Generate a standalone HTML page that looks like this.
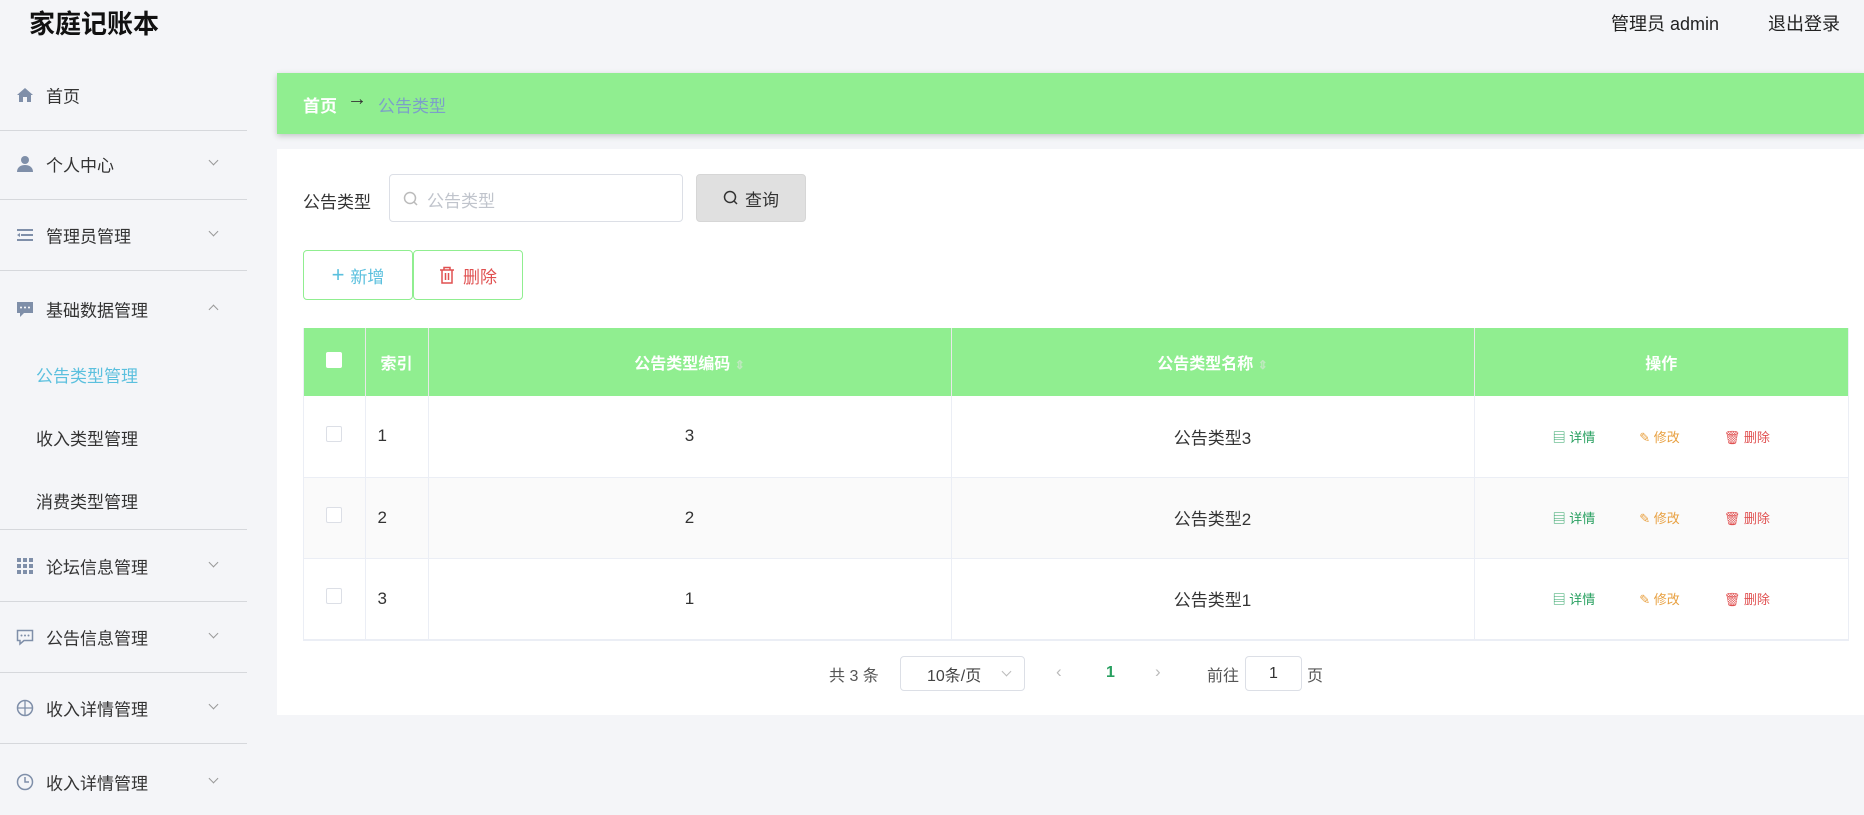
<!DOCTYPE html>
<html><head><meta charset="utf-8"><style>
*{box-sizing:border-box;margin:0;padding:0}
body{width:1864px;height:796px;overflow:hidden;background:#f4f5f8;font-family:"Liberation Sans","Noto Sans CJK SC",sans-serif;color:#333;position:relative}
.abs{position:absolute}
.title{left:29px;top:4px;font-size:26px;font-weight:bold;color:#111}
.hr{top:10px;font-size:18px;color:#222}
.side .it{position:absolute;left:0;width:247px;height:71px;border-bottom:1px solid #d6d8dc;font-size:17px;color:#333}
.side .it span{position:absolute;left:46px;top:50%;transform:translateY(-50%)}
.side .it i{position:absolute;left:16px;top:50%;transform:translateY(-50%);width:18px;height:18px}
.side .it b{position:absolute;left:210px;top:50%;margin-top:-7px;width:7px;height:7px;border-right:1px solid #999;border-bottom:1px solid #999;transform:rotate(45deg)}
.side .it b.up{transform:rotate(-135deg);margin-top:-3px}
.sub{position:absolute;left:36px;font-size:17px;color:#333}
.bc{left:277px;top:73px;width:1587px;height:61px;background:#90ee90;box-shadow:0 2px 6px rgba(0,0,0,.2);font-size:17px}
.card{left:277px;top:149px;width:1587px;height:566px;background:#fff}
.btn{position:absolute;border:1px solid #90ee90;border-radius:4px;background:#fff;font-size:17px;display:flex;align-items:center;justify-content:center}
table{position:absolute;left:303px;top:328px;width:1546px;border-collapse:collapse;font-size:17px}
th{background:#90ee90;color:#fff;height:68px;border-right:1px solid #e8e8e8;font-size:16px}
td{height:81px;border-right:1px solid #ebeef5;border-bottom:1px solid #ebeef5;text-align:center}
tr.alt td{background:#fafafa}
.cb{display:inline-block;width:16px;height:16px;border:1px solid #dcdfe6;border-radius:2px;background:#fff}
.ops{font-size:13px}
.ops span{display:inline-block;margin:0 22px}
.srt{color:#bfe8bf;font-size:12px}
</style></head><body>
<div class="abs title">家庭记账本</div>
<div class="abs hr" style="left:1611px">管理员 admin</div>
<div class="abs hr" style="left:1768px">退出登录</div>

<div class="side">
<div class="it" style="top:60px"><i><svg width="18" height="18" viewBox="0 0 18 18"><path d="M1 9L9 2l8 7h-2v7h-4v-5H7v5H3V9z" fill="#7f8fa9"/></svg></i><span>首页</span></div>
<div class="it" style="top:129px"><i><svg width="18" height="18"><circle cx="9" cy="5" r="4" fill="#7f8fa9"/><path d="M1 17c0-5 4-7 8-7s8 2 8 7z" fill="#7f8fa9"/></svg></i><span>个人中心</span><b></b></div>
<div class="it" style="top:200px"><i><svg width="18" height="18"><rect x="1" y="3" width="16" height="2" fill="#7f8fa9"/><rect x="5" y="8" width="12" height="2" fill="#7f8fa9"/><rect x="1" y="13" width="16" height="2" fill="#7f8fa9"/><path d="M1 9l3-2v4z" fill="#7f8fa9"/></svg></i><span>管理员管理</span><b></b></div>
<div class="it" style="top:271px;height:259px"><i style="top:38px"><svg width="18" height="18"><path d="M1 2h16v11H8l-4 4v-4H1z" fill="#7f8fa9"/><circle cx="5" cy="7.5" r="1" fill="#fff"/><circle cx="9" cy="7.5" r="1" fill="#fff"/><circle cx="13" cy="7.5" r="1" fill="#fff"/></svg></i><span style="top:38px">基础数据管理</span><b class="up" style="top:38px"></b>
<div class="sub" style="top:91px;left:36px;color:#5bc0de">公告类型管理</div>
<div class="sub" style="top:154px">收入类型管理</div>
<div class="sub" style="top:217px">消费类型管理</div></div>
<div class="it" style="top:531px"><i><svg width="18" height="18" fill="#7f8fa9"><rect x="1" y="1" width="4" height="4"/><rect x="7" y="1" width="4" height="4"/><rect x="13" y="1" width="4" height="4"/><rect x="1" y="7" width="4" height="4"/><rect x="7" y="7" width="4" height="4"/><rect x="13" y="7" width="4" height="4"/><rect x="1" y="13" width="4" height="4"/><rect x="7" y="13" width="4" height="4"/><rect x="13" y="13" width="4" height="4"/></svg></i><span>论坛信息管理</span><b></b></div>
<div class="it" style="top:602px"><i><svg width="18" height="18"><path d="M1.5 2.5h15v10H8l-4 3.5v-3.5H1.5z" fill="none" stroke="#7f8fa9" stroke-width="1.5"/><circle cx="5.5" cy="7.5" r="1" fill="#7f8fa9"/><circle cx="9" cy="7.5" r="1" fill="#7f8fa9"/><circle cx="12.5" cy="7.5" r="1" fill="#7f8fa9"/></svg></i><span>公告信息管理</span><b></b></div>
<div class="it" style="top:673px"><i><svg width="18" height="18"><circle cx="9" cy="9" r="7.5" fill="none" stroke="#7f8fa9" stroke-width="1.5"/><path d="M9 1v16M1 9h16" stroke="#7f8fa9" stroke-width="1.3"/></svg></i><span>收入详情管理</span><b></b></div>
<div class="it" style="top:744px;border-bottom:none"><i style="top:38px"><svg width="18" height="18"><circle cx="9" cy="9" r="7.5" fill="none" stroke="#7f8fa9" stroke-width="1.5"/><path d="M9 4v5h4" fill="none" stroke="#7f8fa9" stroke-width="1.5"/></svg></i><span style="top:38px">收入详情管理</span><b style="top:38px"></b></div>
</div>

<div class="abs bc"><span class="abs" style="left:26px;top:19px;color:#fff;font-weight:bold">首页</span><span class="abs" style="left:70px;top:15px;color:#333;font-size:20px">→</span><span class="abs" style="left:101px;top:19px;color:#7c9fc9">公告类型</span></div>
<div class="abs card"></div>
<div class="abs" style="left:303px;top:188px;font-size:17px">公告类型</div>
<div class="abs" style="left:389px;top:174px;width:294px;height:48px;border:1px solid #dcdfe6;border-radius:4px;background:#fff"><svg class="abs" style="left:13px;top:16px" width="16" height="16"><circle cx="7" cy="7" r="5.5" fill="none" stroke="#bbb" stroke-width="1.5"/><path d="M11 11l3 3" stroke="#bbb" stroke-width="1.5"/></svg><span class="abs" style="left:37px;top:12px;color:#c0c4cc;font-size:17px">公告类型</span></div>
<div class="abs" style="left:696px;top:174px;width:110px;height:48px;background:#e0e0e0;border:1px solid #d6d6d6;border-radius:4px;font-size:17px;display:flex;align-items:center;justify-content:center"><svg width="16" height="16" style="margin-right:6px"><circle cx="7" cy="7" r="5.5" fill="none" stroke="#333" stroke-width="1.5"/><path d="M11 11l3 3" stroke="#333" stroke-width="1.5"/></svg>查询</div>
<div class="btn" style="left:303px;top:250px;width:110px;height:50px;color:#5bc0de"><span style="font-size:22px;margin-right:6px;font-weight:300">+</span>新增</div>
<div class="btn" style="left:413px;top:250px;width:110px;height:50px;color:#e05050"><svg width="16" height="18" style="margin-right:8px"><path d="M1 4h14M5 4V1.5h6V4M3 4v13h10V4M6.5 7v7M9.5 7v7" fill="none" stroke="#e05050" stroke-width="1.5"/></svg>删除</div>

<table>
<tr><th style="width:62px"><span class="cb" style="border:none"></span></th><th style="width:63px">索引</th><th style="width:523px">公告类型编码 <span class="srt">⇕</span></th><th style="width:523px">公告类型名称 <span class="srt">⇕</span></th><th>操作</th></tr>
<tr><td><span class="cb"></span></td><td style="text-align:left;padding-left:12px">1</td><td>3</td><td>公告类型3</td><td class="ops"><span style="color:#28a060">▤ 详情</span><span style="color:#e8a040">✎ 修改</span><span style="color:#e05050">🗑 删除</span></td></tr>
<tr class="alt"><td><span class="cb"></span></td><td style="text-align:left;padding-left:12px">2</td><td>2</td><td>公告类型2</td><td class="ops"><span style="color:#28a060">▤ 详情</span><span style="color:#e8a040">✎ 修改</span><span style="color:#e05050">🗑 删除</span></td></tr>
<tr><td><span class="cb"></span></td><td style="text-align:left;padding-left:12px">3</td><td>1</td><td>公告类型1</td><td class="ops"><span style="color:#28a060">▤ 详情</span><span style="color:#e8a040">✎ 修改</span><span style="color:#e05050">🗑 删除</span></td></tr>
</table>
<div class="abs" style="left:303px;top:328px;width:1546px;height:313px;border:1px solid #ebeef5;border-top:none;pointer-events:none"></div>

<div class="abs" style="left:829px;top:662px;font-size:16px;color:#555">共 3 条</div>
<div class="abs" style="left:900px;top:656px;width:125px;height:35px;border:1px solid #dcdfe6;border-radius:4px;font-size:16px;color:#444;display:flex;align-items:center;padding-left:26px">10条/页<span class="abs" style="left:102px;top:11px;width:7px;height:7px;border-right:1px solid #bbb;border-bottom:1px solid #bbb;transform:rotate(45deg)"></span></div>
<div class="abs" style="left:1056px;top:662px;font-size:17px;color:#bbb">‹</div>
<div class="abs" style="left:1106px;top:664px;font-size:16px;color:#28a060;font-weight:bold">1</div>
<div class="abs" style="left:1155px;top:662px;font-size:17px;color:#bbb">›</div>
<div class="abs" style="left:1207px;top:662px;font-size:16px;color:#555">前往</div>
<div class="abs" style="left:1245px;top:656px;width:57px;height:35px;border:1px solid #dcdfe6;border-radius:4px;font-size:16px;display:flex;align-items:center;justify-content:center">1</div>
<div class="abs" style="left:1307px;top:662px;font-size:16px;color:#555">页</div>
</body></html>
